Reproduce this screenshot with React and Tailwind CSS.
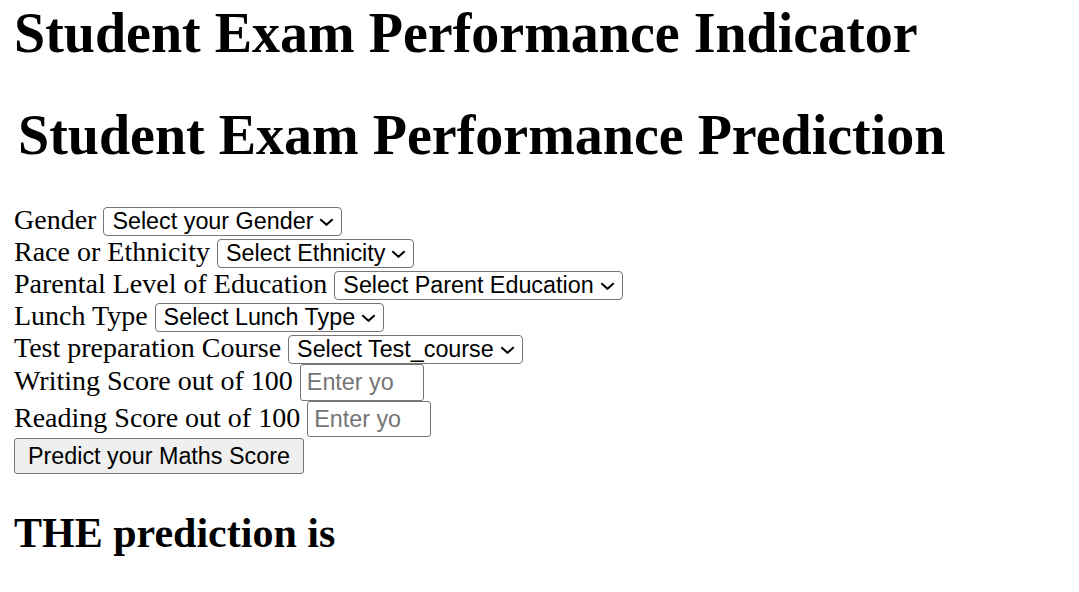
import React from "react";

function FakeSelect({ label }) {
  return (
    <span className="inline-flex items-center h-[29px] border border-[#767676] rounded-[4px] bg-white pl-[8px] pr-[7px] align-baseline font-['Liberation_Sans',Arial,sans-serif] text-[23.33px] leading-[normal] text-black">
      <span>{label}</span>
      <svg className="ml-[6px]" width="15" height="8" viewBox="0 0 15 8" aria-hidden="true">
        <path d="M1.3 1.2 L7.5 6.8 L13.7 1.2" fill="none" stroke="#000" strokeWidth="2" />
      </svg>
    </span>
  );
}

function Row({ children }) {
  return <div className="leading-[normal]">{children}</div>;
}

export default function App() {
  return (
    <div className="min-h-screen bg-white text-black px-[14px] font-['Liberation_Serif','Times_New_Roman',serif] text-[28px] leading-[normal]">
      <h1 className="m-0 pt-px text-[56px] font-bold leading-[normal]">Student Exam Performance Indicator</h1>
      <h1 className="mt-[37.5px] mb-[37.5px] ml-[4px] text-[56px] font-bold leading-[normal]">Student Exam Performance Prediction</h1>
      <form onSubmit={(e) => e.preventDefault()}>
        <Row>Gender <FakeSelect label="Select your Gender" /></Row>
        <Row>Race or Ethnicity <FakeSelect label="Select Ethnicity" /></Row>
        <Row>Parental Level of Education <FakeSelect label="Select Parent Education" /></Row>
        <Row>Lunch Type <FakeSelect label="Select Lunch Type" /></Row>
        <Row>Test preparation Course <FakeSelect label="Select Test_course" /></Row>
        <Row>
          Writing Score out of 100{" "}
          <input
            type="text"
            placeholder="Enter yo"
            className="w-[124px] h-[37px] border border-[#767676] rounded-[3px] px-[6px] align-baseline font-['Liberation_Sans',Arial,sans-serif] text-[23.33px] leading-[normal] placeholder:text-[#757575]"
          />
        </Row>
        <Row>
          Reading Score out of 100{" "}
          <input
            type="text"
            placeholder="Enter yo"
            className="w-[124px] h-[36px] border border-[#767676] rounded-[3px] px-[6px] align-baseline font-['Liberation_Sans',Arial,sans-serif] text-[23.33px] leading-[normal] placeholder:text-[#757575]"
          />
        </Row>
        <Row>
          <button
            type="submit"
            className="mt-px h-[36px] px-[13px] border border-[#767676] rounded-[3px] bg-[#efefef] align-baseline font-['Liberation_Sans',Arial,sans-serif] text-[23.33px] leading-[normal] text-black"
          >
            Predict your Maths Score
          </button>
        </Row>
      </form>
      <h2 className="mt-[34.9px] text-[42px] font-bold leading-[normal]">THE prediction is</h2>
    </div>
  );
}
